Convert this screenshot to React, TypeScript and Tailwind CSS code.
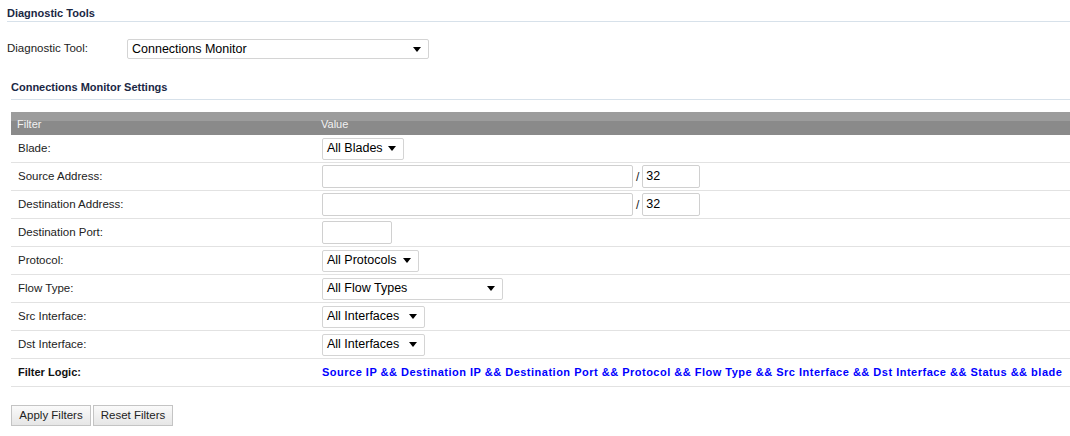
import { ReactNode } from 'react'

const font = { fontFamily: '"Liberation Sans", Arial, sans-serif' }

function Caret() {
  return (
    <svg width="8" height="5" viewBox="0 0 8 5" className="shrink-0">
      <path d="M0 0h8L4 5z" fill="#000" />
    </svg>
  )
}

function Select({ label, width, height = 'h-[22px]' }: { label: string; width: string; height?: string }) {
  return (
    <div
      className={`flex items-center justify-between ${height} border border-[#d4d4d4] rounded-[2px] bg-white pl-[4px] pr-[7px] text-[12.5px] text-black ${width}`}
    >
      <span>{label}</span>
      <Caret />
    </div>
  )
}

function Input({ width, value }: { width: string; value?: string }) {
  return (
    <div
      className={`h-[23px] border border-[#d0d0d0] rounded-[2px] bg-white px-[3px] text-[12.5px] text-black leading-[21px] ${width}`}
    >
      {value}
    </div>
  )
}

function Row({ label, children, bold }: { label: string; children: ReactNode; bold?: boolean }) {
  return (
    <div className="grid grid-cols-[311px_1fr] items-center h-[28px] border-b border-[#e2e2e2]">
      <div
        className={`pl-[7px] ${bold ? 'text-[11px] font-bold text-[#111]' : 'text-[11.5px] text-[#222]'}`}
      >
        {label}
      </div>
      <div className="flex items-center">{children}</div>
    </div>
  )
}

export default function App() {
  return (
    <div className="w-[1070px] h-[436px] bg-white pl-[7px] text-[11px] overflow-hidden" style={font}>
      <div className="pt-[6px] pb-[1px] leading-[14px] font-bold text-[#1a2744]">Diagnostic Tools</div>
      <div className="border-b border-[#d7e1ea]" />

      <div className="flex items-center mt-[17px]">
        <div className="w-[120px] text-[11.5px] text-[#222]">Diagnostic Tool:</div>
        <Select label="Connections Monitor" width="w-[302px]" height="h-[20px]" />
      </div>

      <div className="ml-[4px] mt-[21px]">
        <div className="pb-[5px] leading-[14px] font-bold text-[#1a2744]">Connections Monitor Settings</div>
        <div className="border-b border-[#d7e1ea]" />

        <div className="mt-[12px] grid grid-cols-[311px_1fr] h-[23px] items-end pb-[3px] text-[#f2f2f2] bg-[linear-gradient(#9c9c9c_0,#9c9c9c_9px,#8a8a8a_9px)]">
          <div className="pl-[6px]">Filter</div>
          <div className="-ml-[1px]">Value</div>
        </div>

        <Row label="Blade:">
          <Select label="All Blades" width="w-[82px]" />
        </Row>
        <Row label="Source Address:">
          <Input width="w-[311px]" />
          <span className="mx-[3px] text-[12px] text-[#222]">/</span>
          <Input width="w-[58px]" value="32" />
        </Row>
        <Row label="Destination Address:">
          <Input width="w-[311px]" />
          <span className="mx-[3px] text-[12px] text-[#222]">/</span>
          <Input width="w-[58px]" value="32" />
        </Row>
        <Row label="Destination Port:">
          <Input width="w-[70px]" />
        </Row>
        <Row label="Protocol:">
          <Select label="All Protocols" width="w-[97px]" />
        </Row>
        <Row label="Flow Type:">
          <Select label="All Flow Types" width="w-[181px]" />
        </Row>
        <Row label="Src Interface:">
          <Select label="All Interfaces" width="w-[103px]" />
        </Row>
        <Row label="Dst Interface:">
          <Select label="All Interfaces" width="w-[103px]" />
        </Row>
        <Row label="Filter Logic:" bold>
          <span className="font-bold text-[11px] tracking-[0.5px] text-[#0000ff] whitespace-nowrap">
            Source IP &amp;&amp; Destination IP &amp;&amp; Destination Port &amp;&amp; Protocol &amp;&amp; Flow Type &amp;&amp; Src Interface &amp;&amp; Dst Interface &amp;&amp; Status &amp;&amp; blade
          </span>
        </Row>

        <div className="flex gap-[2px] mt-[18px]">
          <button className="w-[80px] h-[21px] border border-[#c4c4c4] bg-[linear-gradient(#fafafa,#e6e6e6)] text-[11.5px] text-[#222]">
            Apply Filters
          </button>
          <button className="w-[80px] h-[21px] border border-[#c4c4c4] bg-[linear-gradient(#fafafa,#e6e6e6)] text-[11.5px] text-[#222]">
            Reset Filters
          </button>
        </div>
      </div>
    </div>
  )
}
